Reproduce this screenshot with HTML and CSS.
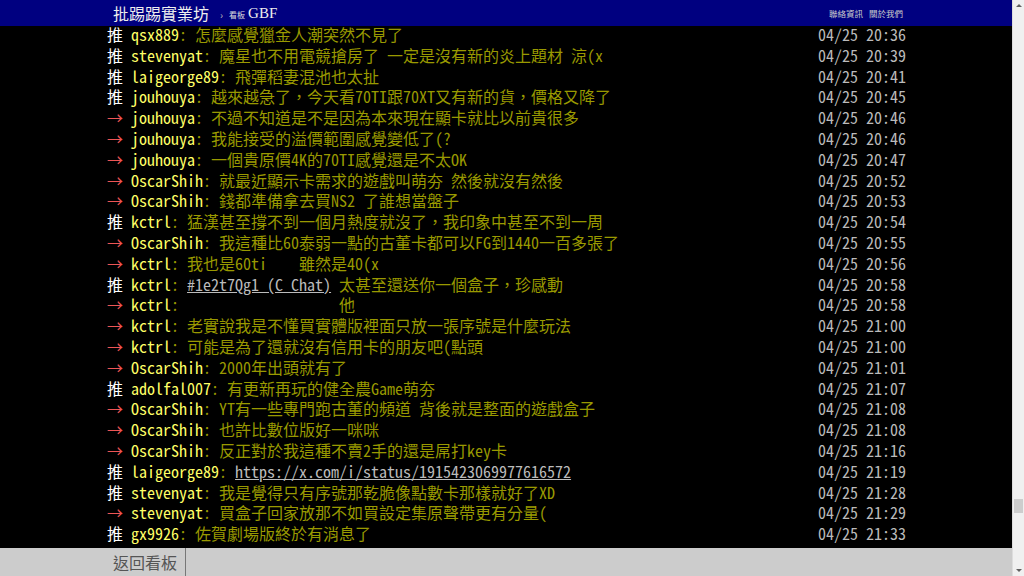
FILE: index.html
```html
<html>
    <head>
        <title>[閒聊] GBF - 看板 GBF - 批踢踢實業坊</title>
        <link rel="stylesheet" href="styles.css">
    </head>
    <body>
        <div id='window'>
            <div id='page'>
                <div id='topbar'>
                    <div class='bar-inner'>
                        <span class='logo'>批踢踢實業坊</span>
                        <span class='sep'>›</span>
                        <span class='board-label'>看板</span>
                        <span class='board-name'>GBF</span>
                        <span class='right-links'>
                            <span>聯絡資訊</span>
                            <span>關於我們</span>
                        </span>
                    </div>
                </div>

                <div id='main-content'>
                    <div class='pushes'>
                        <div class='push'><span class='tag hl'>推 </span><span class='userid'>qsx889</span><span class='content'>: 怎麼感覺獵金人潮突然不見了</span><span class='ipdatetime'>04/25 20:36</span></div>
                        <div class='push'><span class='tag hl'>推 </span><span class='userid'>stevenyat</span><span class='content'>: 魔星也不用電競搶房了 一定是沒有新的炎上題材 涼(x</span><span class='ipdatetime'>04/25 20:39</span></div>
                        <div class='push'><span class='tag hl'>推 </span><span class='userid'>laigeorge89</span><span class='content'>: 飛彈稻妻混池也太扯</span><span class='ipdatetime'>04/25 20:41</span></div>
                        <div class='push'><span class='tag hl'>推 </span><span class='userid'>jouhouya</span><span class='content'>: 越來越急了，今天看70TI跟70XT又有新的貨，價格又降了</span><span class='ipdatetime'>04/25 20:45</span></div>
                        <div class='push'><span class='tag arrow'>→ </span><span class='userid'>jouhouya</span><span class='content'>: 不過不知道是不是因為本來現在顯卡就比以前貴很多</span><span class='ipdatetime'>04/25 20:46</span></div>
                        <div class='push'><span class='tag arrow'>→ </span><span class='userid'>jouhouya</span><span class='content'>: 我能接受的溢價範圍感覺變低了(?</span><span class='ipdatetime'>04/25 20:46</span></div>
                        <div class='push'><span class='tag arrow'>→ </span><span class='userid'>jouhouya</span><span class='content'>: 一個貴原價4K的70TI感覺還是不太OK</span><span class='ipdatetime'>04/25 20:47</span></div>
                        <div class='push'><span class='tag arrow'>→ </span><span class='userid'>OscarShih</span><span class='content'>: 就最近顯示卡需求的遊戲叫萌夯 然後就沒有然後</span><span class='ipdatetime'>04/25 20:52</span></div>
                        <div class='push'><span class='tag arrow'>→ </span><span class='userid'>OscarShih</span><span class='content'>: 錢都準備拿去買NS2 了誰想當盤子</span><span class='ipdatetime'>04/25 20:53</span></div>
                        <div class='push'><span class='tag hl'>推 </span><span class='userid'>kctrl</span><span class='content'>: 猛漢甚至撐不到一個月熱度就沒了，我印象中甚至不到一周</span><span class='ipdatetime'>04/25 20:54</span></div>
                        <div class='push'><span class='tag arrow'>→ </span><span class='userid'>OscarShih</span><span class='content'>: 我這種比60泰弱一點的古董卡都可以FG到1440一百多張了</span><span class='ipdatetime'>04/25 20:55</span></div>
                        <div class='push'><span class='tag arrow'>→ </span><span class='userid'>kctrl</span><span class='content'>: 我也是60ti    雖然是40(x</span><span class='ipdatetime'>04/25 20:56</span></div>
                        <div class='push'><span class='tag hl'>推 </span><span class='userid'>kctrl</span><span class='content'>: <a href='#'>#1e2t7Qg1 (C_Chat)</a> 太甚至還送你一個盒子，珍感動</span><span class='ipdatetime'>04/25 20:58</span></div>
                        <div class='push'><span class='tag arrow'>→ </span><span class='userid'>kctrl</span><span class='content'>:                    他</span><span class='ipdatetime'>04/25 20:58</span></div>
                        <div class='push'><span class='tag arrow'>→ </span><span class='userid'>kctrl</span><span class='content'>: 老實說我是不懂買實體版裡面只放一張序號是什麼玩法</span><span class='ipdatetime'>04/25 21:00</span></div>
                        <div class='push'><span class='tag arrow'>→ </span><span class='userid'>kctrl</span><span class='content'>: 可能是為了還就沒有信用卡的朋友吧(點頭</span><span class='ipdatetime'>04/25 21:00</span></div>
                        <div class='push'><span class='tag arrow'>→ </span><span class='userid'>OscarShih</span><span class='content'>: 2000年出頭就有了</span><span class='ipdatetime'>04/25 21:01</span></div>
                        <div class='push'><span class='tag hl'>推 </span><span class='userid'>adolfal007</span><span class='content'>: 有更新再玩的健全農Game萌夯</span><span class='ipdatetime'>04/25 21:07</span></div>
                        <div class='push'><span class='tag arrow'>→ </span><span class='userid'>OscarShih</span><span class='content'>: YT有一些專門跑古董的頻道 背後就是整面的遊戲盒子</span><span class='ipdatetime'>04/25 21:08</span></div>
                        <div class='push'><span class='tag arrow'>→ </span><span class='userid'>OscarShih</span><span class='content'>: 也許比數位版好一咪咪</span><span class='ipdatetime'>04/25 21:08</span></div>
                        <div class='push'><span class='tag arrow'>→ </span><span class='userid'>OscarShih</span><span class='content'>: 反正對於我這種不賣2手的還是屌打key卡</span><span class='ipdatetime'>04/25 21:16</span></div>
                        <div class='push'><span class='tag hl'>推 </span><span class='userid'>laigeorge89</span><span class='content'>: <a href='#'>https://x.com/i/status/1915423069977616572</a></span><span class='ipdatetime'>04/25 21:19</span></div>
                        <div class='push'><span class='tag hl'>推 </span><span class='userid'>stevenyat</span><span class='content'>: 我是覺得只有序號那乾脆像點數卡那樣就好了XD</span><span class='ipdatetime'>04/25 21:28</span></div>
                        <div class='push'><span class='tag arrow'>→ </span><span class='userid'>stevenyat</span><span class='content'>: 買盒子回家放那不如買設定集原聲帶更有分量(</span><span class='ipdatetime'>04/25 21:29</span></div>
                        <div class='push'><span class='tag hl'>推 </span><span class='userid'>gx9926</span><span class='content'>: 佐賀劇場版終於有消息了</span><span class='ipdatetime'>04/25 21:33</span></div>
                    </div>
                </div>

                <div id='navigation'>
                    <div class='bar-inner'>
                        <a class='btn' href='#'>返回看板</a>
                    </div>
                </div>
            </div>

            <div id='scrollbar'>
                <div class='arrow-up'></div>
                <div class='track'>
                    <div class='thumb'></div>
                </div>
                <div class='arrow-down'></div>
            </div>
        </div>
    </body>
</html>
```

FILE: styles.css
```css
html, body{
    margin: 0px;
    height: 100%;
    overflow: hidden;
}
body{
    background-color: black;
    font-family: "Noto Sans Mono CJK TC", "Noto Sans CJK TC", monospace;
}
#window{
    display: flex;
    height: 576px;
}
#page{
    flex: 1;
    display: flex;
    flex-direction: column;
    min-width: 0;
}
.bar-inner{
    width: 800px;
    margin: 0 auto;
    display: flex;
    align-items: center;
    height: 100%;
}

/* top bar */
#topbar{
    background-color: #000080;
    height: 26px;
    flex: none;
    color: #fff;
}
    #topbar .logo{
        font-family: "Noto Sans CJK TC", sans-serif;
        font-size: 16px;
        margin-left: 7px;
        color: #eee;
    }
    #topbar .sep{
        font-size: 10px;
        color: #bbb;
        margin: 2px 6px 0 11px;
    }
    #topbar .board-label{
        font-family: "Noto Sans CJK TC", sans-serif;
        font-size: 8px;
        color: #ddd;
        margin-top: 3px;
    }
    #topbar .board-name{
        font-family: "Liberation Serif", serif;
        font-size: 15px;
        margin-left: 3px;
        color: #eee;
    }
    #topbar .right-links{
        margin-left: auto;
        margin-right: 3px;
        display: flex;
        gap: 6px;
        font-family: "Noto Sans CJK TC", sans-serif;
        font-size: 8.5px;
        color: #ccc;
    }

/* pushes */
#main-content{
    flex: 1;
    overflow: hidden;
}
    .pushes{
        width: 800px;
        margin: -2px auto 0 auto;
    }
    div.push{
        display: flex;
        font-size: 16px;
        line-height: 20.8px;
        height: 20.8px;
        white-space: pre;
        padding-left: 1px;
    }
    .push .tag{
        color: #fff;
    }
    .push .tag.arrow{
        color: #e55;
    }
    .push .userid{
        color: #ff6;
    }
    .push .content{
        color: #990;
        flex: 1;
    }
    .push .content a{
        color: #bbb;
        text-decoration: underline;
    }
    .push .ipdatetime{
        color: #bbb;
    }

/* bottom bar */
#navigation{
    background-color: #ccc;
    height: 28px;
    flex: none;
}
    #navigation .btn{
        display: block;
        height: 100%;
        line-height: 28px;
        padding: 0 8px 0 7px;
        border-right: 1px solid #777;
        color: #555;
        text-decoration: none;
        font-family: "Noto Sans CJK TC", sans-serif;
        font-size: 16px;
    }

/* scrollbar */
#scrollbar{
    width: 11px;
    flex: none;
    background-color: #f0f0f0;
    border-left: 1px solid #ddd;
    display: flex;
    flex-direction: column;
}
    #scrollbar .arrow-up,
    #scrollbar .arrow-down{
        height: 11px;
        display: flex;
        justify-content: center;
        align-items: center;
    }
    #scrollbar .arrow-up::after{
        content: '';
        border-left: 3px solid transparent;
        border-right: 3px solid transparent;
        border-bottom: 3px solid #606060;
    }
    #scrollbar .arrow-down::after{
        content: '';
        border-left: 3px solid transparent;
        border-right: 3px solid transparent;
        border-top: 3px solid #606060;
    }
    #scrollbar .track{
        flex: 1;
        padding-top: 488px;
    }
    #scrollbar .thumb{
        height: 14px;
        margin: 0 1px 0 1px;
        background-color: #cdcdcd;
    }
```
